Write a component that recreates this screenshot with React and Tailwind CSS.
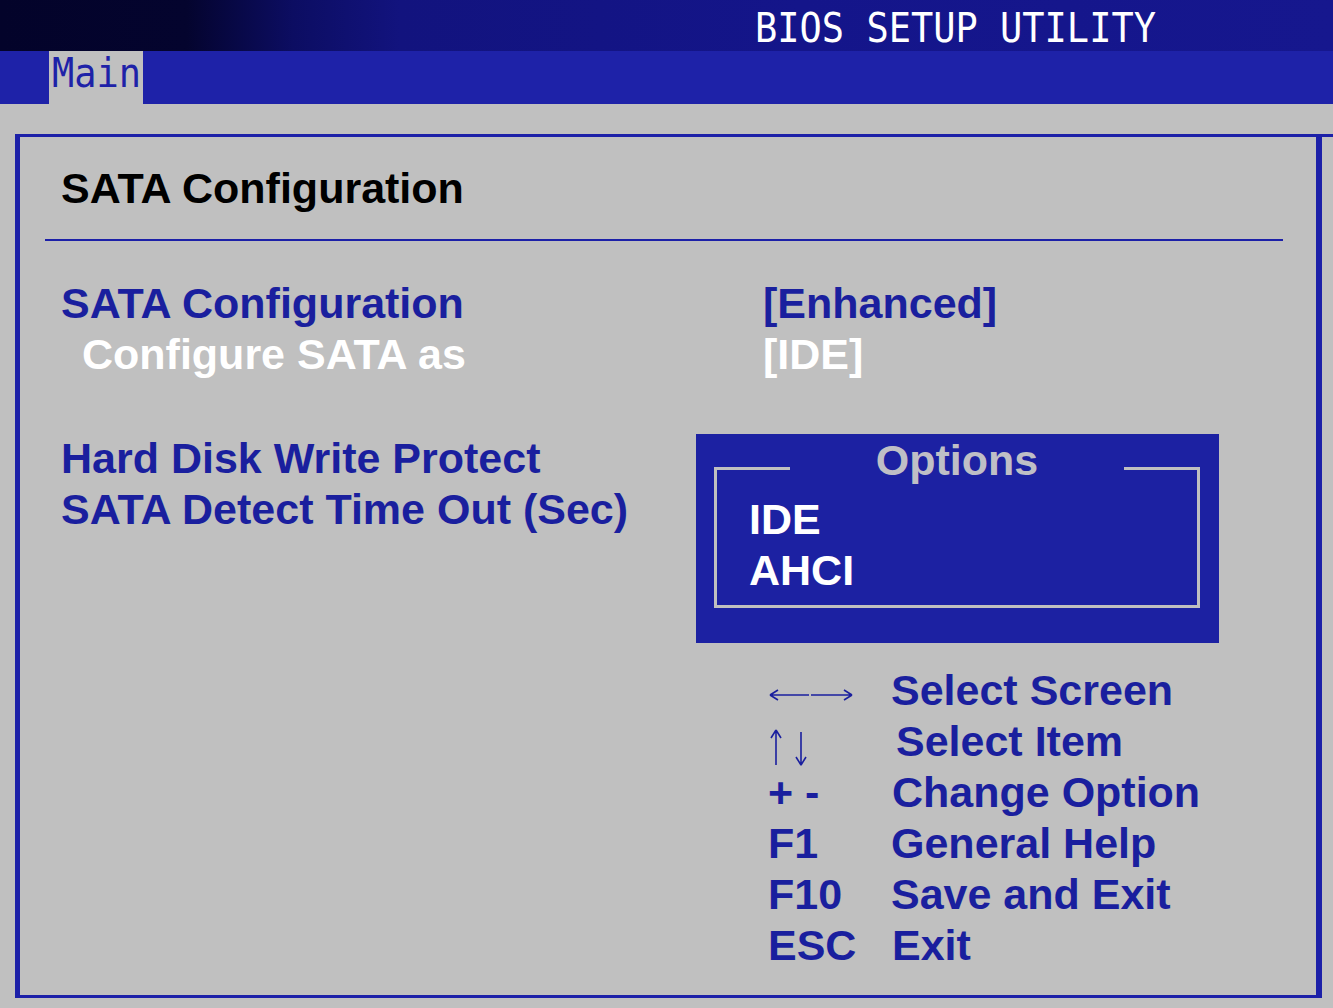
import React from "react";

const sans = "font-['Liberation_Sans',Arial,sans-serif]";
const mono = "font-['DejaVu_Sans_Mono',monospace]";

const helpRows = [
  { key: "arrowsLR", text: "Select Screen", shift: "" },
  { key: "arrowsUD", text: "Select Item", shift: "ml-[5px]" },
  { key: "+ -", text: "Change Option", shift: "ml-[1px]" },
  { key: "F1", text: "General Help", shift: "" },
  { key: "F10", text: "Save and Exit", shift: "" },
  { key: "ESC", text: "Exit", shift: "ml-[1px]" },
];

const KeyLabel = ({ k }) => {
  if (k === "arrowsLR") {
    return (
      <svg width="90" height="51" viewBox="0 0 90 51" fill="none" stroke="#1a1f9e" strokeWidth="1.6" className="-ml-[3px]">
        <path d="M5 30H44M5 30l8-5M5 30l8 5" />
        <path d="M46 30H87M87 30l-8-5M87 30l-8 5" />
      </svg>
    );
  }
  if (k === "arrowsUD") {
    return (
      <svg width="50" height="51" viewBox="0 0 50 51" fill="none" stroke="#1a1f9e" strokeWidth="1.6" className="-ml-[3px]">
        <path d="M11 14V49M11 14l-5 8M11 14l5 8" />
        <path d="M36 16V49M36 49l-5-8M36 49l5-8" />
      </svg>
    );
  }
  return <span>{k}</span>;
};

const App = () => {
  return (
    <div className={`w-[1333px] h-[1008px] bg-[#c0c0c0] overflow-hidden ${sans}`}>
      {/* title bar */}
      <div className="h-[51px] bg-[linear-gradient(90deg,#03032a_0%,#04042e_14%,#0c0d62_22%,#12137e_30%,#14158a_60%,#16178e_100%)] pl-[755px] pt-[10px]">
        <div className={`${mono} text-[37px] leading-none text-white scale-y-110 whitespace-pre`}>
          BIOS SETUP UTILITY
        </div>
      </div>

      {/* tab bar */}
      <div className="h-[53px] bg-[#1e22a8] pl-[49px] flex">
        <div className={`w-[94px] h-full bg-[#c0c0c0] pl-[3px] pt-[4px] ${mono} text-[37px] leading-none text-[#1e22a8]`}>
          <div className="scale-y-110">Main</div>
        </div>
      </div>

      {/* main frame */}
      <div className="pt-[30px]">
        <div className="ml-[15px] border-t-[3px] border-[#1c20a8]">
          <div className="w-[1307px] h-[861px] border-l-[5px] border-r-[6px] border-b-[3px] border-[#1c20a8] pl-[25px] pt-[26px] font-bold text-[43px] leading-[51px]">
            <div className="pl-[16px] text-black">SATA Configuration</div>
            <div className="mt-[25px] w-[1238px] h-[2px] bg-[#1c20a8]" />

            <div className="mt-[37px] grid grid-cols-[718px_1fr]">
              <div className="pl-[16px] text-[#1a1f9e]">SATA Configuration</div>
              <div className="text-[#1a1f9e]">[Enhanced]</div>
              <div className="pl-[37px] text-white">Configure SATA as</div>
              <div className="text-white">[IDE]</div>
            </div>

            <div className="mt-[53px] flex">
              <div className="w-[651px] pl-[16px] text-[#1a1f9e]">
                <div>Hard Disk Write Protect</div>
                <div>SATA Detect Time Out (Sec)</div>
              </div>

              <div className="w-[523px]">
                {/* options popup */}
                <div className="mt-px h-[209px] bg-[#1c21a2] pt-[33px] pl-[18px] pr-[19px]">
                  <div className="relative h-[141px] border-[3px] border-[#c0c0c0] pl-[32px] pt-[24px] text-white">
                    <div className="absolute -top-[35px] left-0 right-0 flex justify-center">
                      <span className="bg-[#1c21a2] px-[86px] text-[#bfbfc6]">Options</span>
                    </div>
                    <div>IDE</div>
                    <div>AHCI</div>
                  </div>
                </div>

                {/* key help */}
                <div className="mt-[22px] pl-[72px] text-[#1a1f9e]">
                  {helpRows.map((r) => (
                    <div key={r.text} className="flex h-[51px]">
                      <div className="w-[123px] shrink-0">
                        <KeyLabel k={r.key} />
                      </div>
                      <div className={r.shift}>{r.text}</div>
                    </div>
                  ))}
                </div>
              </div>
            </div>
          </div>
        </div>
      </div>
    </div>
  );
};

export default App;
